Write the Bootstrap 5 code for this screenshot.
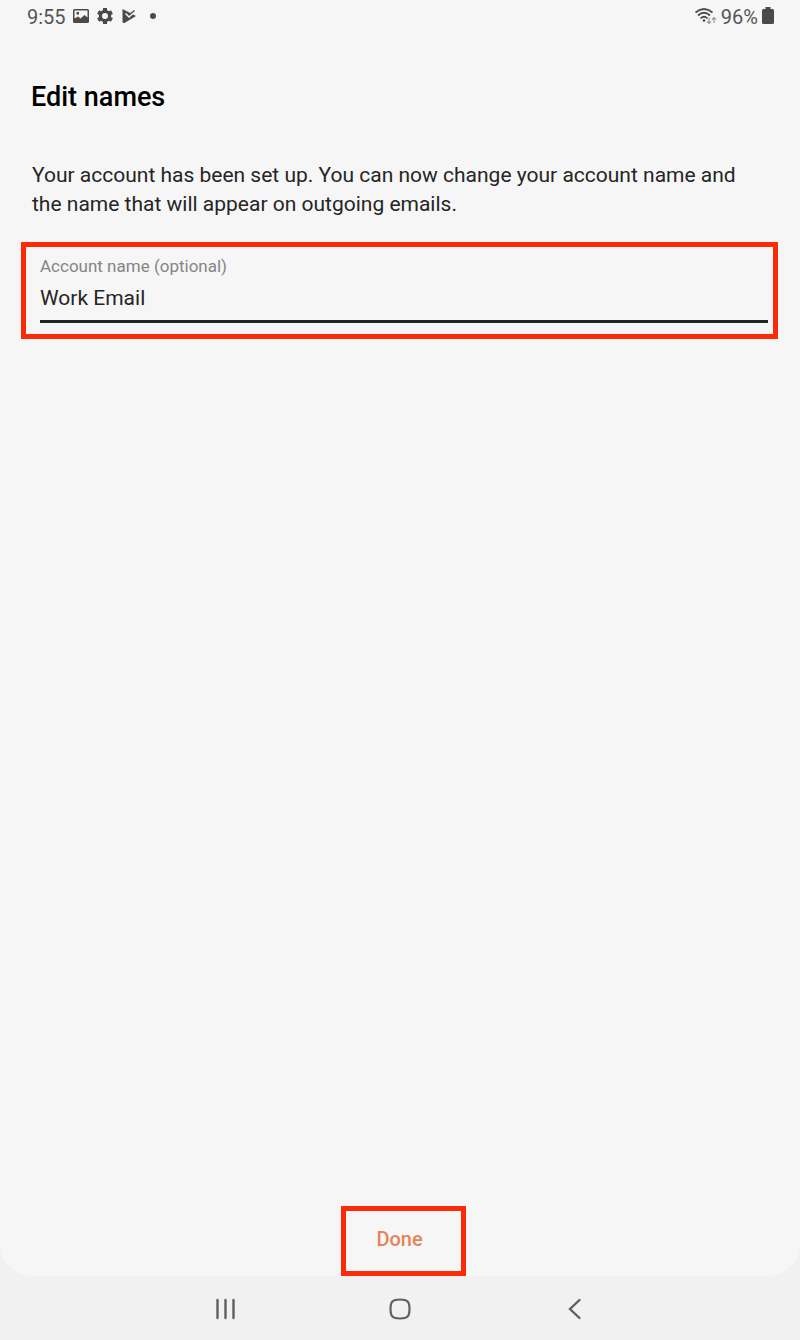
<!DOCTYPE html>
<html lang="en">
<head>
<meta charset="utf-8">
<meta name="viewport" content="width=device-width, initial-scale=1">
<title>Edit names</title>
<link href="https://cdn.jsdelivr.net/npm/bootstrap@5.3.0/dist/css/bootstrap.min.css" rel="stylesheet">
<style>
  body { font-family: Roboto, sans-serif; background: #f1f1f1; color: #252525; }
  .screen { background: #f6f6f6; border-radius: 0 0 32px 32px; }
  .status-bar { height: 34px; padding: 0 26px 0 27px; font-size: 20px; line-height: 34px; color: #555; }
  .status-bar svg { display: block; margin-bottom: 2px; }
  .status-icons { gap: 8px; margin-left: 7px; }
  .page-title { font-size: 27px; line-height: 32px; font-weight: 500; color: #000; margin: 47px 31px 0; }
  .intro { font-size: 21px; line-height: 29px; margin: 48px 32px 0; }
  .marked { border: 5px solid #fb2a08; }
  .name-field { margin: 23px 22px 0 21px; padding: 7px 5px 11px 14px; }
  .name-field label { font-size: 17px; line-height: 24px; color: #858585; }
  .name-field .form-control { font-size: 21px; line-height: 28px; height: 45px; padding: 2px 0 4px; color: #252525; background: transparent; border: 0; border-bottom: 3px solid #252525; border-radius: 0; }
  .done-btn { width: 125px; height: 70px; padding: 0 8px 4px 0; margin-left: 7px; font-size: 20px; font-weight: 500; color: #e2865a; background: transparent; border-radius: 0; }
  .nav-keys { height: 64px; padding: 2px 138px 0; }
  .nav-keys .btn { flex: 1; }
  .nav-keys svg { display: block; margin: 0 auto; }
</style>
<script src="https://cdn.jsdelivr.net/npm/bootstrap@5.3.0/dist/js/bootstrap.bundle.min.js"></script>
</head>
<body class="d-flex flex-column min-vh-100">
<div class="screen d-flex flex-column flex-grow-1">
  <header class="status-bar d-flex justify-content-between align-items-center">
    <div class="d-flex align-items-center">
      <span>9:55</span>
      <div class="status-icons d-flex align-items-center">
        <svg width="16" height="16" viewBox="0 0 16 16" fill="#4a4a4a" aria-hidden="true"><path fill-rule="evenodd" d="M1.500 1H14.500Q16 1 16 2.500V13.500Q16 15 14.500 15H1.500Q0 15 0 13.500V2.500Q0 1 1.500 1ZM1.500 2.500V10.500L5 8.500L7.500 10.500L11.500 7L14.500 9.500V2.500ZM3.500 4H6V6.500H3.500Z"/></svg>
        <svg width="16" height="16" viewBox="0 0 16 16" aria-hidden="true"><circle cx="8" cy="8" r="4.600" fill="none" stroke="#4a4a4a" stroke-width="3.200"/><path d="M8 0V3M8 13V16M1.100 4L3.700 5.500M12.300 10.500L14.900 12M1.100 12L3.700 10.500M12.300 5.500L14.900 4" stroke="#4a4a4a" stroke-width="4"/></svg>
        <svg width="16" height="16" viewBox="0 0 16 16" aria-hidden="true"><path d="M1.500 1L15 8L3.500 15Q1.500 15.500 1.500 13.500Z" fill="#4a4a4a"/><path d="M4.500 5.500L8 9L15 2.500" fill="none" stroke="#f6f6f6" stroke-width="1.500"/><path d="M8.500 6.500L13.500 2.500" stroke="#4a4a4a" stroke-width="1.500"/></svg>
        <svg width="16" height="16" viewBox="0 0 16 16" fill="#4a4a4a" aria-hidden="true"><circle cx="8" cy="8" r="3"/></svg>
      </div>
    </div>
    <div class="d-flex align-items-center">
      <svg class="me-1" width="23" height="18" viewBox="0 0 23 18" fill="none" stroke="#4a4a4a" stroke-width="1.700" aria-hidden="true"><path d="M1.500 5.500Q10-1.500 18.500 5.500M4 8.500Q10 3 16 8.500M6.500 11.500Q10 8 13.500 11.500"/><circle cx="10" cy="13.500" r="1.300" fill="#4a4a4a" stroke="none"/><path d="M15 10.500V16.500M13 14.500L15 16.500L17 14.500M20 16V10.500M18 12.500L20 10.500L22 12.500" stroke="#999" stroke-width="1.200"/></svg>
      <span>96%</span>
      <svg class="ms-1" width="12" height="18" viewBox="0 0 12 18" fill="#4a4a4a" aria-hidden="true"><path d="M3.500 0H8.500V2H10.500Q12 2 12 3.500V15.500Q12 17 10.500 17H1.500Q0 17 0 15.500V3.500Q0 2 1.500 2H3.500Z"/></svg>
    </div>
  </header>
  <main class="d-flex flex-column flex-grow-1">
    <h1 class="page-title">Edit names</h1>
    <p class="intro">Your account has been set up. You can now change your account name and the name that will appear on outgoing emails.</p>
    <div class="name-field marked">
      <label class="d-block" for="account-name">Account name (optional)</label>
      <input class="form-control shadow-none" id="account-name" type="text" value="Work Email">
    </div>
    <div class="mt-auto text-center"><button type="button" class="btn done-btn marked">Done</button></div>
  </main>
</div>
<nav class="nav-keys d-flex align-items-center" aria-label="System navigation">
  <button type="button" class="btn border-0 p-0" aria-label="Recent apps"><svg width="22" height="22" viewBox="0 0 22 22" stroke="#606060" stroke-width="2.400" stroke-linecap="round"><path d="M3.500 2V20M11.500 2V20M19.500 2V20"/></svg></button>
  <button type="button" class="btn border-0 p-0" aria-label="Home"><svg width="22" height="22" viewBox="0 0 22 22" fill="none" stroke="#606060" stroke-width="2.200"><path d="M11 1.500C18.500 1.500 20.500 3.500 20.500 11S18.500 20.500 11 20.500S1.500 18.500 1.500 11S3.500 1.500 11 1.500Z"/></svg></button>
  <button type="button" class="btn border-0 p-0" aria-label="Back"><svg width="22" height="22" viewBox="0 0 22 22" fill="none" stroke="#606060" stroke-width="2.400" stroke-linecap="round"><path d="M15.500 2L6 11L15.500 20"/></svg></button>
</nav>
</body>
</html>
